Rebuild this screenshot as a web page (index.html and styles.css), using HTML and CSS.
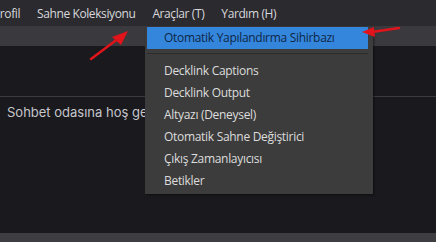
FILE: index.html
```html
<!DOCTYPE html>
<html lang="tr">
<head>
    <meta charset="UTF-8">
    <meta name="viewport" content="width=device-width, initial-scale=1.0">
    <title>OBS Araçlar</title>
    <link rel="stylesheet" href="styles.css">
</head>
<body>
    <div class="menubar">
        <span class="menu-title first">Profil</span>
        <span class="menu-title">Sahne Koleksiyonu</span>
        <span class="menu-title">Araçlar (T)</span>
        <span class="menu-title">Yardım (H)</span>
    </div>
    <div class="toolbar"></div>
    <div class="preview"></div>
    <div class="chat">
        <p class="chat-line">Sohbet odasına hoş geldiniz!</p>
    </div>
    <div class="statusbar"></div>

    <!-- Araçlar dropdown -->
    <ul class="dropdown">
        <li class="item active">Otomatik Yapılandırma Sihirbazı</li>
        <li class="separator"></li>
        <li class="item">Decklink Captions</li>
        <li class="item">Decklink Output</li>
        <li class="item">Altyazı (Deneysel)</li>
        <li class="item">Otomatik Sahne Değiştirici</li>
        <li class="item">Çıkış Zamanlayıcısı</li>
        <li class="item">Betikler</li>
    </ul>

    <!-- annotation arrows -->
    <svg class="arrows" width="436" height="242" viewBox="0 0 436 242">
        <line x1="91" y1="59" x2="119" y2="38" stroke="#e0141a" stroke-width="2.5" stroke-linecap="round"/>
        <polygon points="128,31 112,37 121,45" fill="#e0141a"/>
        <line x1="399" y1="28" x2="372" y2="32" stroke="#e0141a" stroke-width="2.5" stroke-linecap="round"/>
        <polygon points="362,32 374,27 375,37" fill="#e0141a"/>
    </svg>
</body>
</html>
```

FILE: styles.css
```css
body {
    margin: 0;
    width: 436px;
    height: 242px;
    overflow: hidden;
    background: #1a191e;
    font-family: 'Open Sans', 'Noto Sans', sans-serif;
    display: flex;
    flex-direction: column;
    position: relative;
}

.menubar {
    height: 26px;
    background: #2b2a2f;
    display: flex;
    align-items: center;
    gap: 17px;
    margin-left: -7px;
    flex-shrink: 0;
}

.menu-title {
    color: #d8d8dc;
    font-size: 12px;
    letter-spacing: -0.4px;
    white-space: nowrap;
}

.toolbar {
    height: 20px;
    background: #3a393e;
    flex-shrink: 0;
}

.preview {
    height: 50px;
    background: #1a191e;
    border-bottom: 1px solid #3b3a40;
    flex-shrink: 0;
}

.chat {
    flex: 1;
    padding: 0 7px;
}

.chat-line {
    margin: 7px 0 0;
    color: #c6c6cb;
    font-family: Inter, 'Noto Sans', sans-serif;
    font-size: 13px;
    white-space: nowrap;
}

.statusbar {
    height: 9px;
    background: #3e3d42;
    flex-shrink: 0;
}

.dropdown {
    position: absolute;
    top: 27px;
    left: 145px;
    width: 228px;
    margin: 0;
    padding: 0 0 2px;
    list-style: none;
    background: #3c3c3c;
    box-shadow: 1px 1px 2px rgba(0, 0, 0, 0.5);
}

.item {
    height: 22px;
    line-height: 22px;
    margin: 0 5px 0 2px;
    padding-left: 17px;
    color: #dcdcdc;
    font-size: 12px;
    letter-spacing: -0.3px;
    white-space: nowrap;
}

.item.active {
    background: #3486dc;
    color: #0f2747;
}

.separator {
    height: 1px;
    margin: 4px 5px 6px 2px;
    background: #2c2c2c;
}

.arrows {
    position: absolute;
    top: 0;
    left: 0;
    pointer-events: none;
}
```
